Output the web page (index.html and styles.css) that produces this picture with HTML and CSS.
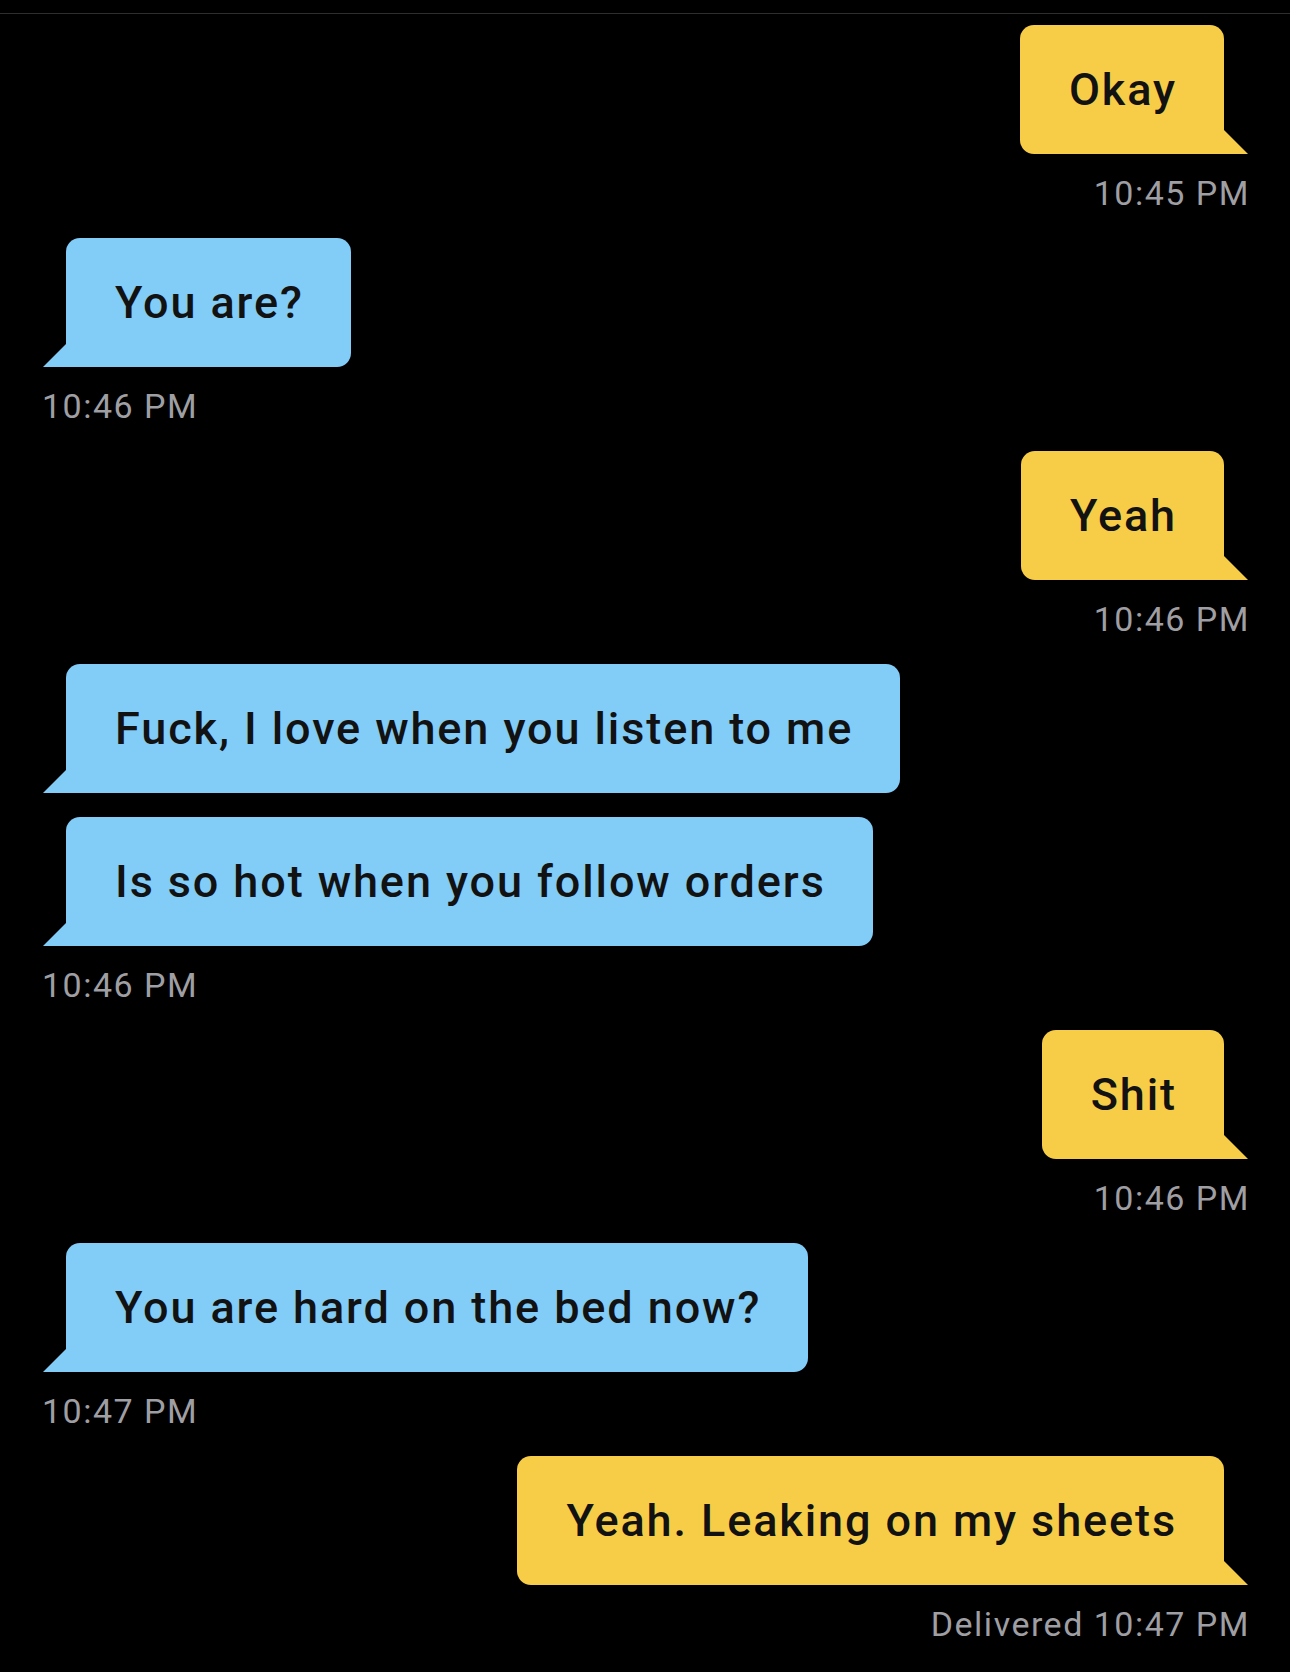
FILE: index.html
```html
<!DOCTYPE html>
<html>
<head>
    <meta charset="utf-8" />
    <title>Chat</title>
    <link rel="stylesheet" href="styles.css">
</head>
<body>
    <div class="fejlec"></div>
    <div class="chat">
        <div class="csoport ki">
            <div class="buborek">Okay</div>
            <div class="ido">10:45 PM</div>
        </div>
        <div class="csoport be">
            <div class="buborek">You are?</div>
            <div class="ido">10:46 PM</div>
        </div>
        <div class="csoport ki">
            <div class="buborek">Yeah</div>
            <div class="ido">10:46 PM</div>
        </div>
        <div class="csoport be">
            <div class="buborek">Fuck, I love when you listen to me</div>
            <div class="buborek">Is so hot when you follow orders</div>
            <div class="ido">10:46 PM</div>
        </div>
        <div class="csoport ki">
            <div class="buborek">Shit</div>
            <div class="ido">10:46 PM</div>
        </div>
        <div class="csoport be">
            <div class="buborek">You are hard on the bed now?</div>
            <div class="ido">10:47 PM</div>
        </div>
        <div class="csoport ki">
            <div class="buborek">Yeah. Leaking on my sheets</div>
            <div class="ido">Delivered 10:47 PM</div>
        </div>
    </div>
</body>
</html>
```

FILE: styles.css
```css
* {
    margin: 0;
    padding: 0;
    box-sizing: border-box;
}

body {
    background: #000;
    font-family: Roboto, "Liberation Sans", sans-serif;
    min-height: 1672px;
}

.fejlec {
    height: 14px;
    border-bottom: 1px solid #2e2e2e;
}

.chat {
    padding: 11px 42px 0 42px;
    display: flex;
    flex-direction: column;
}

.csoport {
    display: flex;
    flex-direction: column;
    gap: 24px;
}

.ki {
    align-items: flex-end;
}

.be {
    align-items: flex-start;
}

.buborek {
    position: relative;
    padding: 36px 47px 36px 49px;
    font-size: 45px;
    line-height: 57px;
    letter-spacing: 1.9px;
    font-weight: 500;
    color: #121212;
    border-radius: 14px;
}

.be .buborek {
    background: #82ccf8;
    margin-left: 24px;
    border-bottom-left-radius: 0;
}

.ki .buborek {
    background: #f7cd48;
    margin-right: 24px;
    border-bottom-right-radius: 0;
}

    .be .buborek::before {
        content: "";
        position: absolute;
        left: -23px;
        bottom: 0;
        width: 24px;
        height: 24px;
        background: #82ccf8;
        clip-path: polygon(100% 0, 100% 100%, 0 100%);
    }

    .ki .buborek::after {
        content: "";
        position: absolute;
        right: -24px;
        bottom: 0;
        width: 25px;
        height: 25px;
        background: #f7cd48;
        clip-path: polygon(0 0, 100% 100%, 0 100%);
    }

.ido {
    font-size: 34px;
    line-height: 40px;
    letter-spacing: 1.5px;
    color: #9e9ea3;
    margin-top: -5px;
    margin-right: -2px;
    margin-bottom: 25px;
}
```
